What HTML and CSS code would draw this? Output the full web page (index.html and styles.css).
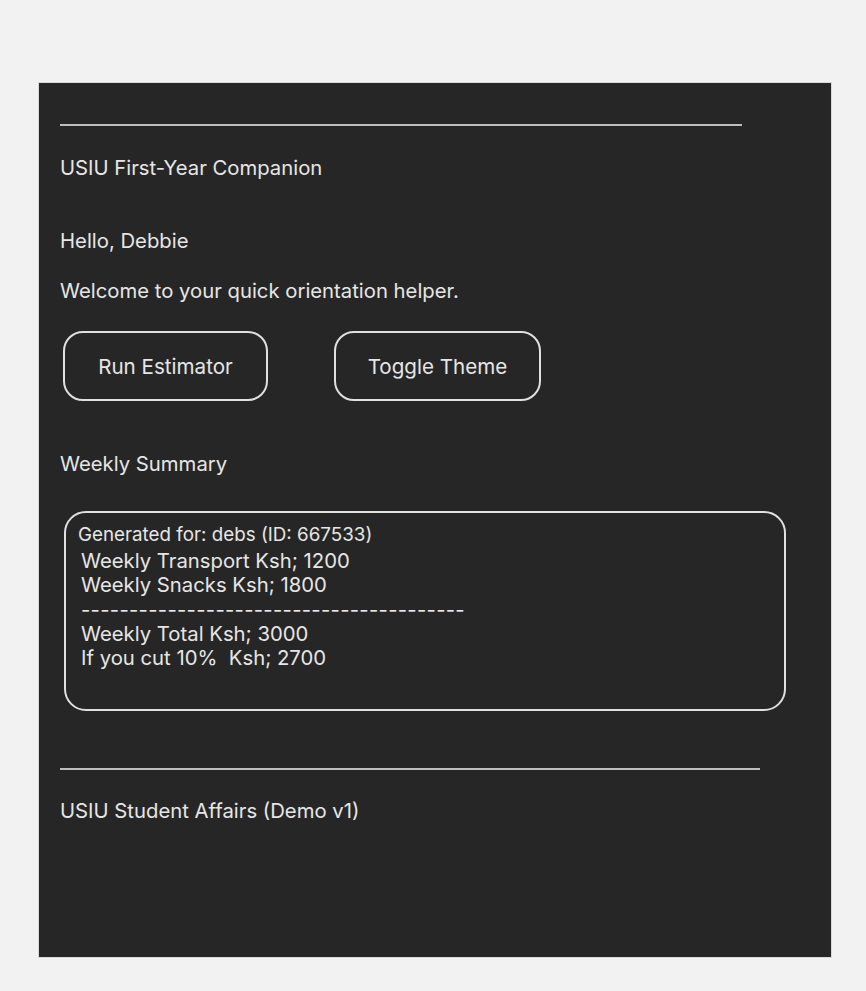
FILE: index.html
```html
<!DOCTYPE html>
<html lang="en">
<head>
<meta charset="utf-8">
<title>USIU First-Year Companion</title>
<link rel="stylesheet" href="styles.css">
</head>
<body>
<main class="panel">
  <div class="rule rule-top"></div>
  <h1 class="title">USIU First-Year Companion</h1>
  <p class="hello">Hello, Debbie</p>
  <p class="welcome">Welcome to your quick orientation helper.</p>
  <div class="actions">
    <button class="btn btn-run">Run Estimator</button>
    <button class="btn btn-theme">Toggle Theme</button>
  </div>
  <h2 class="section">Weekly Summary</h2>
  <div class="summary">
    <div class="gen">Generated for: debs (ID: 667533)</div>
    <pre class="lines">Weekly Transport Ksh; 1200
Weekly Snacks Ksh; 1800
<span class="dashes">----------------------------------------</span>
Weekly Total Ksh; 3000
If you cut 10%  Ksh; 2700</pre>
  </div>
  <div class="rule rule-bottom"></div>
  <footer class="footer">USIU Student Affairs (Demo v1)</footer>
</main>
</body>
</html>
```
FILE: styles.css
```css
html, body {
  margin: 0;
  padding: 0;
  background: #f2f2f2;
}
body {
  padding: 83px 35px 34px 39px;
  font-family: Inter, "Noto Sans", sans-serif;
  color: #e6e6e6;
}
.panel {
  box-sizing: border-box;
  width: 792px;
  height: 874px;
  background: #262626;
  padding: 41px 21px 0 21px;
  box-shadow: 0 0 0 1px #d8d8d8;
}
.rule {
  height: 2px;
  background: #bdbdbd;
}
.rule-top { width: 682px; }
.rule-bottom { width: 700px; margin-top: 57px; }
.title, .hello, .welcome, .section, .footer {
  font-size: 20.3px;
  font-weight: 400;
  margin: 0;
  line-height: 24px;
}
.title { margin-top: 30px; }
.hello { margin-top: 49px; }
.welcome { margin-top: 26px; }
.actions {
  display: flex;
  gap: 66px;
  margin-top: 28px;
  padding-left: 3px;
}
.btn {
  box-sizing: border-box;
  height: 70px;
  background: transparent;
  border: 2px solid #e0e0e0;
  border-radius: 20px;
  color: #e6e6e6;
  font-family: Inter, "Noto Sans", sans-serif;
  font-size: 20.6px;
  padding: 0;
}
.btn-run { width: 205px; }
.btn-theme { width: 207px; }
.section { margin-top: 51px; }
.summary {
  box-sizing: border-box;
  margin: 35px 0 0 4px;
  width: 722px;
  height: 200px;
  border: 2px solid #e0e0e0;
  border-radius: 22px;
  padding: 10px 12px;
}
.gen {
  font-size: 18.8px;
  line-height: 24px;
}
.lines {
  margin: 2px 0 0 3px;
  font-family: Inter, "Noto Sans", sans-serif;
  font-size: 20.3px;
  line-height: 24.3px;
  white-space: pre;
}
.dashes { letter-spacing: 0.27px; }
.footer { margin-top: 29px; }
```
